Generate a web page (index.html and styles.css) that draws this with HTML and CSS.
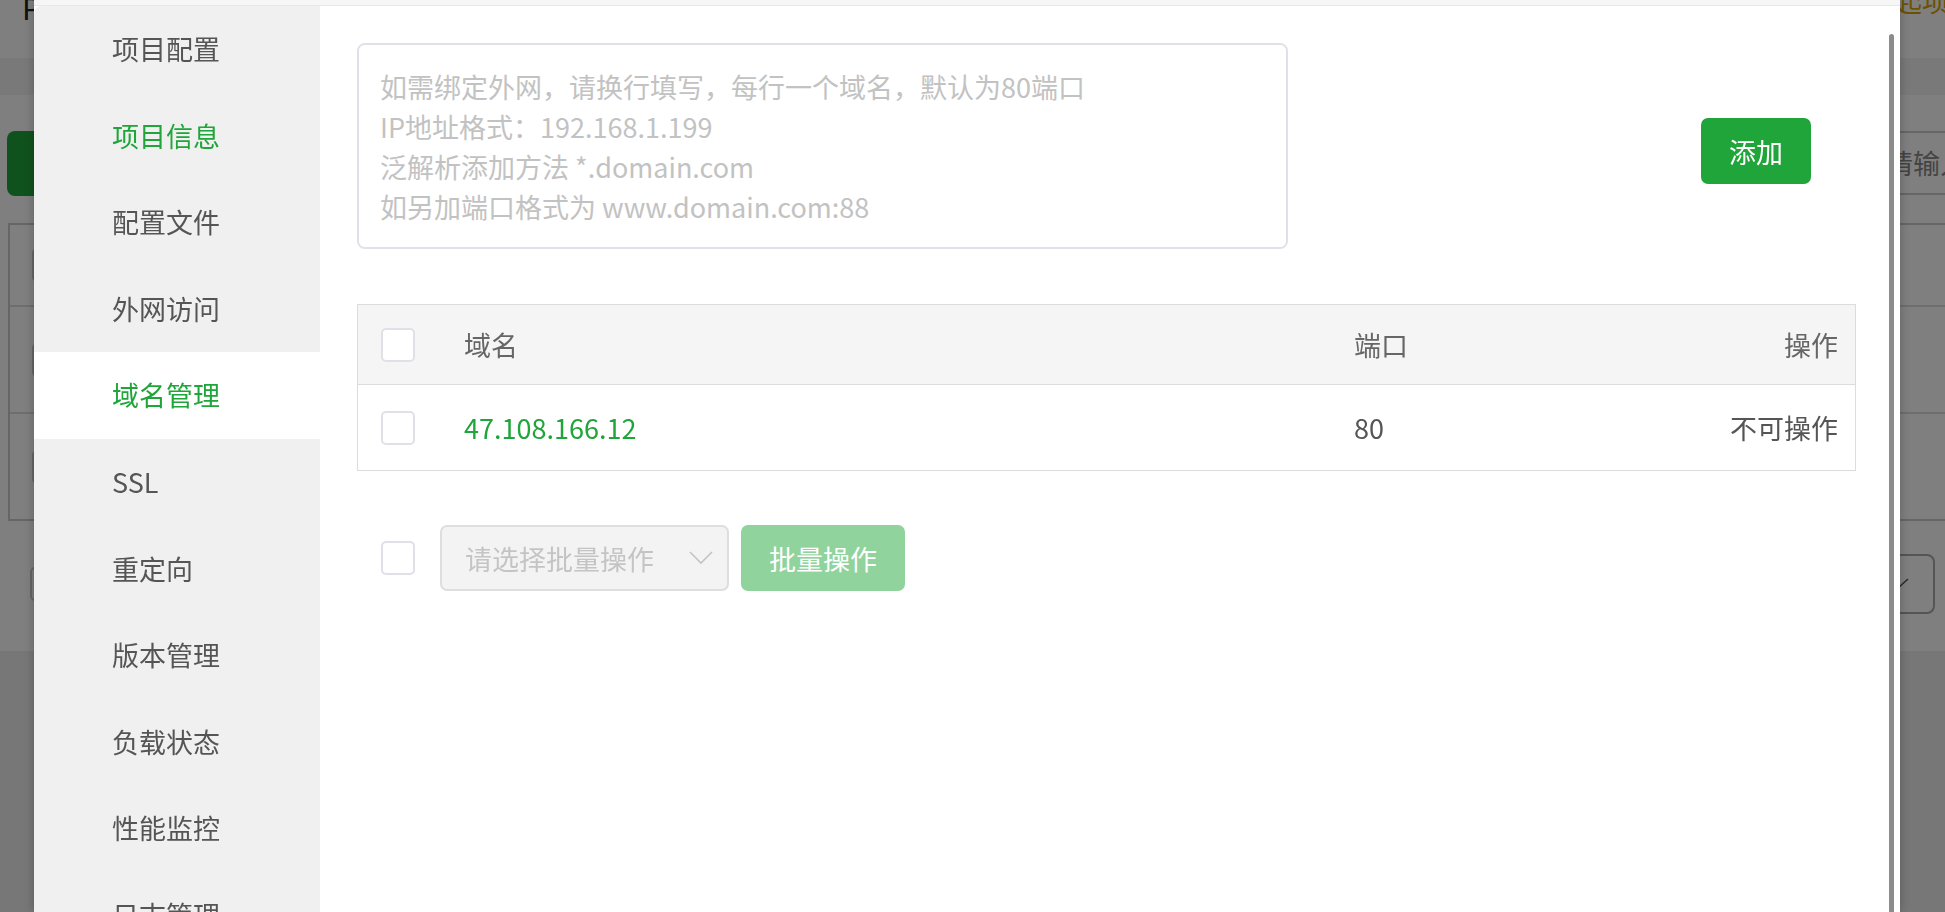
FILE: index.html
```html
<!DOCTYPE html>
<html lang="zh-CN">
<head>
  <meta charset="UTF-8" />
  <meta name="viewport" content="width=device-width, initial-scale=1.0" />
  <title>域名管理</title>
  <link rel="stylesheet" href="styles.css">
</head>
<body>
  <!-- page behind the dialog -->
  <div class="page">
    <div class="page-header">
      <span class="page-title">Python项目</span>
      <span class="page-notice">发起项目</span>
    </div>
    <div class="page-strip"></div>
    <div class="page-panel">
      <div class="page-toolbar">
        <button class="page-add">添加项目</button>
        <div class="page-search">请输入项目名称</div>
      </div>
      <div class="page-table">
        <div class="page-row"><span class="page-check"></span></div>
        <div class="page-row tall"><span class="page-check"></span></div>
        <div class="page-row tall"><span class="page-check"></span></div>
      </div>
      <div class="page-footer">
        <span class="page-check"></span>
        <div class="page-size">
          <svg width="22" height="12" viewBox="0 0 22 12"><polyline points="1,1 11,10 21,1" fill="none" stroke="#555" stroke-width="1.6"/></svg>
        </div>
      </div>
    </div>
  </div>

  <div class="mask"></div>

  <div class="dialog">
    <div class="dialog-top"></div>
    <div class="dialog-body">
      <ul class="side-menu">
        <li>项目配置</li>
        <li class="hover">项目信息</li>
        <li>配置文件</li>
        <li>外网访问</li>
        <li class="active">域名管理</li>
        <li>SSL</li>
        <li>重定向</li>
        <li>版本管理</li>
        <li>负载状态</li>
        <li>性能监控</li>
        <li>日志管理</li>
      </ul>

      <div class="domain-panel">
        <div class="domain-form">
          <textarea class="domain-input" placeholder="如需绑定外网，请换行填写，每行一个域名，默认为80端口&#10;IP地址格式：192.168.1.199&#10;泛解析添加方法 *.domain.com&#10;如另加端口格式为 www.domain.com:88"></textarea>
          <button class="btn-add">添加</button>
        </div>

        <div class="domain-table">
          <div class="row head">
            <div class="cell"><span class="checkbox"></span></div>
            <div class="cell">域名</div>
            <div class="cell">端口</div>
            <div class="cell right">操作</div>
          </div>
          <div class="row">
            <div class="cell"><span class="checkbox"></span></div>
            <div class="cell link">47.108.166.12</div>
            <div class="cell">80</div>
            <div class="cell right">不可操作</div>
          </div>
        </div>

        <div class="batch-bar">
          <span class="checkbox"></span>
          <div class="batch-select">
            <span>请选择批量操作</span>
            <svg width="24" height="14" viewBox="0 0 24 14"><polyline points="1,1 12,12 23,1" fill="none" stroke="#c4c4c4" stroke-width="1.6"/></svg>
          </div>
          <button class="btn-batch">批量操作</button>
        </div>
      </div>
    </div>
    <div class="scroll-thumb"></div>
  </div>
</body>
</html>
```

FILE: styles.css
```css
body {
  margin: 0;
  font-family: "Noto Sans CJK SC", "Noto Sans", sans-serif;
  background-color: #eee;
  color: #555;
  overflow: hidden;
}

button {
  font-family: inherit;
  border: none;
  cursor: pointer;
}

/* background page */
.page {
  width: 1945px;
  overflow: hidden;
}

.page-header {
  height: 58px;
  background-color: #fff;
  display: flex;
  justify-content: space-between;
  overflow: hidden;
}

.page-title {
  font-size: 30px;
  line-height: 30px;
  margin: -8px 0 0 22px;
  color: #222;
}

.page-notice {
  font-size: 27px;
  line-height: 27px;
  margin: -13px -31px 0 0;
  color: #d9a400;
}

.page-strip {
  height: 37px;
  background-color: #f2f2f2;
}

.page-panel {
  height: 556px;
  background-color: #fff;
  padding: 0 0 0 8px;
}

.page-toolbar {
  display: flex;
  justify-content: space-between;
  padding-top: 36px;
}

.page-add {
  height: 65px;
  width: 160px;
  margin-left: -1px;
  background-color: #20a53a;
  border-radius: 8px;
  color: #fff;
  font-size: 27px;
}

.page-search {
  width: 300px;
  height: 64px;
  border: 2px solid #ccc;
  border-right: none;
  box-sizing: border-box;
  font-size: 27px;
  line-height: 60px;
  padding-left: 14px;
  color: #888;
  white-space: nowrap;
  overflow: hidden;
  margin-right: -225px;
}

.page-table {
  margin-top: 27px;
  border: 2px solid #ccc;
  border-right: none;
}

.page-row {
  height: 80px;
  display: flex;
  align-items: center;
  padding-left: 22px;
  border-bottom: 2px solid #ddd;
}

.page-row.tall {
  height: 105px;
}

.page-row:last-child {
  border-bottom: none;
}

.page-check {
  width: 30px;
  height: 30px;
  border: 2px solid #ccc;
  border-radius: 5px;
  background: #fff;
}

.page-footer {
  display: flex;
  justify-content: space-between;
  align-items: center;
  padding: 33px 10px 0 22px;
}

.page-size {
  width: 120px;
  height: 60px;
  border: 2px solid #aaa;
  border-radius: 8px;
  display: flex;
  align-items: center;
  justify-content: flex-end;
  padding-right: 24px;
  box-sizing: border-box;
}

.mask {
  position: fixed;
  inset: 0;
  background-color: rgba(0, 0, 0, 0.5);
}

/* dialog */
.dialog {
  position: fixed;
  left: 34px;
  top: 0;
  width: 1866px;
  bottom: 0;
  background-color: #fff;
  box-shadow: 0 0 10px rgba(0, 0, 0, 0.25);
  display: flex;
  flex-direction: column;
}

.dialog-top {
  height: 5px;
  background-color: #f6f6f6;
  border-bottom: 1px solid #e8e8e8;
}

.dialog-body {
  flex: 1;
  display: flex;
  min-height: 0;
}

.side-menu {
  list-style: none;
  margin: 0;
  padding: 0;
  width: 286px;
  background-color: #f0f0f0;
  border-top-left-radius: 8px;
}

.side-menu li {
  height: 86.6px;
  line-height: 86px;
  padding-left: 78px;
  font-size: 27px;
  color: #555;
}

.side-menu li.hover {
  color: #20a53a;
}

.side-menu li.active {
  background-color: #fff;
  color: #20a53a;
}

.domain-panel {
  flex: 1;
  padding: 37px 44px 0 37px;
}

.domain-form {
  display: flex;
  align-items: center;
  justify-content: space-between;
}

.domain-input {
  width: 931px;
  height: 206px;
  box-sizing: border-box;
  border: 2px solid #dfe1e8;
  border-radius: 8px;
  padding: 22px 21px;
  font-family: inherit;
  font-size: 27px;
  line-height: 40px;
  resize: none;
  outline: none;
  color: #555;
}

.domain-input::placeholder {
  color: #c2c2c2;
}

.btn-add {
  width: 110px;
  height: 66px;
  margin: 10px 45px 0 0;
  background-color: #20a53a;
  color: #fff;
  font-size: 27px;
  border-radius: 7px;
}

.domain-table {
  margin-top: 55px;
  border: 1px solid #dcdcdc;
}

.row {
  display: grid;
  grid-template-columns: 106px 890px 1fr 220px;
  align-items: center;
  height: 85px;
  font-size: 27px;
  color: #555;
}

.row.head {
  height: 79px;
  background-color: #f5f5f5;
  border-bottom: 1px solid #dcdcdc;
  color: #666;
}

.cell {
  display: flex;
  align-items: center;
}

.cell:first-child {
  padding-left: 23px;
}

.cell.right {
  justify-content: flex-end;
  padding-right: 17px;
}

.cell.link {
  color: #20a53a;
}

.checkbox {
  display: inline-block;
  width: 34px;
  height: 34px;
  box-sizing: border-box;
  border: 2px solid #dfe1e6;
  border-radius: 5px;
  background-color: #fff;
}

.batch-bar {
  display: flex;
  align-items: center;
  margin-top: 54px;
  padding-left: 24px;
}

.batch-select {
  width: 289px;
  height: 66px;
  box-sizing: border-box;
  margin-left: 25px;
  border: 2px solid #dedede;
  border-radius: 7px;
  background-color: #f3f3f3;
  display: flex;
  align-items: center;
  justify-content: space-between;
  padding: 0 14px 0 23px;
  font-size: 27px;
  color: #c4c4c4;
}

.btn-batch {
  width: 164px;
  height: 66px;
  margin-left: 12px;
  background-color: #90d39d;
  color: #fff;
  font-size: 27px;
  border-radius: 7px;
}

.scroll-thumb {
  position: absolute;
  right: 6px;
  top: 34px;
  bottom: 0;
  width: 5px;
  border-radius: 3px 3px 0 0;
  background-color: #8c8c8c;
}
```
